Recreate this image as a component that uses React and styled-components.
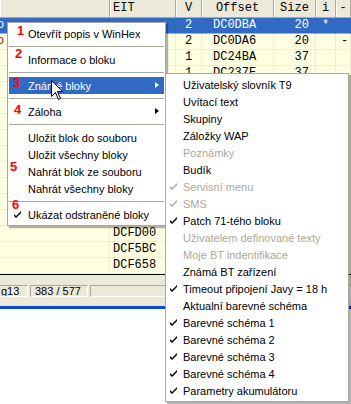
import React from 'react';
import styled, { createGlobalStyle } from 'styled-components';

const GlobalStyle = createGlobalStyle`
  html, body {
    margin: 0;
    padding: 0;
    background: #fff;
  }
  body {
    width: 351px;
    height: 404px;
    overflow: hidden;
    font-family: "Liberation Sans", Arial, sans-serif;
  }
`;

const COLS = '110px 66px 26px 72px 42px 20px 1fr';

const Screen = styled.div`
  position: relative;
  width: 351px;
  height: 404px;
  overflow: hidden;
  background: #fff;
`;

const Window = styled.div`
  display: flex;
  flex-direction: column;
  height: 306px;
  background: #ece9d8;
  border-bottom: 3px solid #0a48d8;
`;

const Table = styled.div`
  display: flex;
  flex-direction: column;
  background: #ffffe1;
  border-bottom: 1px solid #000;
`;

const Row = styled.div`
  display: grid;
  grid-template-columns: ${COLS};
  height: ${p => (p.$head ? 18 : 16)}px;
  background: ${p => (p.$sel ? '#316ac5' : '#ffffe1')};
  color: ${p => (p.$sel ? '#fff' : '#000')};
  font-family: "Liberation Mono", "Courier New", monospace;
  font-size: 12px;
  line-height: ${p => (p.$head ? 17 : 15)}px;
`;

const HeadCell = styled.div`
  background: #ece9d8;
  color: #000;
  border-right: 1px solid #aca899;
  border-bottom: 1px solid #aca899;
  box-shadow: inset 1px 0 #fff;
  text-align: ${p => p.$align || 'center'};
  padding-left: ${p => p.$pad || 0}px;
  white-space: nowrap;
  overflow: hidden;
`;

const Cell = styled.div`
  border-right: 1px solid ${p => (p.$sel ? '#316ac5' : '#efefcf')};
  border-bottom: 1px solid ${p => (p.$sel ? '#e8a848' : '#efefcf')};
  text-align: ${p => p.$align || 'left'};
  padding: ${p => p.$pad || '0'};
  color: ${p => p.$color || 'inherit'};
  white-space: nowrap;
  overflow: hidden;
`;

const Lead = styled.span`
  margin-left: -3px;
`;

const StatusBar = styled.div`
  display: flex;
  gap: 2px;
  margin-top: 10px;
  height: 12px;
`;

const Panel = styled.div`
  box-sizing: border-box;
  width: ${p => (p.$w ? `${p.$w}px` : 'auto')};
  flex: ${p => (p.$w ? 'none' : 1)};
  border-top: 1px solid #aca899;
  border-left: 1px solid ${p => (p.$open ? 'transparent' : '#aca899')};
  border-right: 1px solid #fff;
  border-bottom: 1px solid #fff;
  font-size: 11px;
  line-height: 10px;
  padding-left: ${p => p.$pad ?? 4}px;
  white-space: nowrap;
  overflow: hidden;
`;

const Menu = styled.div`
  position: absolute;
  left: ${p => p.$x}px;
  top: ${p => p.$y}px;
  width: ${p => p.$w}px;
  box-sizing: border-box;
  background: #fff;
  border: 1px solid #aca899;
  padding: 2px 1px;
  box-shadow: 2px 2px 1px rgba(0, 0, 0, 0.3);
  font-size: 11px;
`;

const Item = styled.div`
  position: relative;
  display: flex;
  align-items: center;
  height: 17px;
  padding-left: ${p => p.$indent}px;
  background: ${p => (p.$hot ? '#316ac5' : 'transparent')};
  color: ${p => (p.$hot ? '#fff' : p.$off ? '#aca899' : '#000')};
  white-space: nowrap;
`;

const Separator = styled.div`
  height: 9px;
  display: flex;
  align-items: center;
  &::after {
    content: '';
    flex: 1;
    height: 1px;
    background: #aca899;
  }
`;

const Arrow = styled.span`
  position: absolute;
  right: 5px;
  top: 5px;
  width: 0;
  height: 0;
  border-top: 3.5px solid transparent;
  border-bottom: 3.5px solid transparent;
  border-left: 4px solid ${p => (p.$hot ? '#fff' : '#000')};
`;

const Check = styled.svg`
  position: absolute;
  left: ${p => p.$left}px;
  top: 5px;
`;

const Badge = styled.span`
  position: absolute;
  left: ${p => p.$x}px;
  top: ${p => p.$y}px;
  font-family: "Liberation Sans", Arial, sans-serif;
  font-weight: bold;
  font-size: 13px;
  line-height: 13px;
  color: #ff0000;
`;

const Cursor = styled.svg`
  position: absolute;
  left: 51px;
  top: 80px;
`;

const rows = [
  { lead: 'o', v: '2', off: 'DC0DBA', size: '20', i: '*', sel: true },
  { lead: 'o', v: '2', off: 'DC0DA6', size: '20', last: '-', red: true },
  { v: '1', off: 'DC24BA', size: '37' },
  { v: '1', off: 'DC237E', size: '37' },
  {}, {}, {}, {}, {}, {}, {}, {}, {},
  { eit: 'DCFD00' },
  { eit: 'DCF5BC' },
  { eit: 'DCF658' },
];

const subItems = [
  { t: 'Uživatelský slovník T9' },
  { t: 'Uvítací text' },
  { t: 'Skupiny' },
  { t: 'Záložky WAP' },
  { t: 'Poznámky', off: true },
  { t: 'Budík' },
  { t: 'Servisní menu', off: true, check: true },
  { t: 'SMS', off: true, check: true },
  { t: 'Patch 71-tého bloku', check: true },
  { t: 'Uživatelem definované texty', off: true },
  { t: 'Moje BT indentifikace', off: true },
  { t: 'Známá BT zařízení' },
  { t: 'Timeout připojení Javy = 18 h', check: true },
  { t: 'Aktualní barevné schéma' },
  { t: 'Barevné schéma 1', check: true },
  { t: 'Barevné schéma 2', check: true },
  { t: 'Barevné schéma 3', check: true },
  { t: 'Barevné schéma 4', check: true },
  { t: 'Parametry akumulátoru', check: true },
];

const Tick = ({ left, off }) => (
  <Check $left={left} width="7" height="7" viewBox="0 0 7 7">
    <path d="M0 3 L0 5 L2 7 L7 2 L7 0 L2 5 Z" fill={off ? '#aca899' : '#000'} />
  </Check>
);

const App = () => (
  <Screen>
    <GlobalStyle />
    <Window>
      <Table>
        <Row $head>
          <HeadCell />
          <HeadCell $align="left" $pad={3}>EIT</HeadCell>
          <HeadCell>V</HeadCell>
          <HeadCell>Offset</HeadCell>
          <HeadCell>Size</HeadCell>
          <HeadCell>i</HeadCell>
          <HeadCell>-</HeadCell>
        </Row>
        {rows.map((r, n) => (
          <Row key={n} $sel={r.sel}>
            <Cell $sel={r.sel} $color={r.red ? '#d00000' : undefined}>
              <Lead>{r.lead}</Lead>
            </Cell>
            <Cell $sel={r.sel} $pad="0 0 0 3px">{r.eit}</Cell>
            <Cell $sel={r.sel} $align="center">{r.v}</Cell>
            <Cell $sel={r.sel} $pad="0 0 0 11px">{r.off}</Cell>
            <Cell $sel={r.sel} $align="right" $pad="0 6px 0 0">{r.size}</Cell>
            <Cell $sel={r.sel} $align="center">{r.i}</Cell>
            <Cell $sel={r.sel} $pad="0 0 0 5px">{r.last}</Cell>
          </Row>
        ))}
      </Table>
      <StatusBar>
        <Panel $w={28} $pad={0} $open>g13</Panel>
        <Panel $w={58}>383 / 577</Panel>
        <Panel />
      </StatusBar>
    </Window>

    <Menu $x={7} $y={22} $w={159}>
      <Item $indent={19}>Otevřít popis v WinHex</Item>
      <Separator />
      <Item $indent={19}>Informace o bloku</Item>
      <Separator />
      <Item $indent={19} $hot>
        Známé bloky
        <Arrow $hot />
      </Item>
      <Separator />
      <Item $indent={19}>
        Záloha
        <Arrow />
      </Item>
      <Separator />
      <Item $indent={19}>Uložit blok do souboru</Item>
      <Item $indent={19}>Uložit všechny bloky</Item>
      <Item $indent={19}>Nahrát blok ze souboru</Item>
      <Item $indent={19}>Nahrát všechny bloky</Item>
      <Separator />
      <Item $indent={19}>
        <Tick left={5} />
        Ukázat odstraněné bloky
      </Item>
    </Menu>

    <Menu $x={165} $y={73} $w={184}>
      {subItems.map(s => (
        <Item key={s.t} $indent={16} $off={s.off}>
          {s.check && <Tick left={3} off={s.off} />}
          {s.t}
        </Item>
      ))}
    </Menu>

    <Badge $x={17} $y={24}>1</Badge>
    <Badge $x={15} $y={47}>2</Badge>
    <Badge $x={13} $y={76}>3</Badge>
    <Badge $x={14} $y={103}>4</Badge>
    <Badge $x={10} $y={160}>5</Badge>
    <Badge $x={12} $y={198}>6</Badge>

    <Cursor width="13" height="21" viewBox="0 0 13 21">
      <path
        d="M0.5 0.5 L0.5 16.5 L4.5 12.5 L7.5 19.5 L9.5 18.5 L6.5 11.5 L11.5 11.5 Z"
        fill="#fff"
        stroke="#000"
        strokeWidth="1"
      />
    </Cursor>
  </Screen>
);

export default App;
